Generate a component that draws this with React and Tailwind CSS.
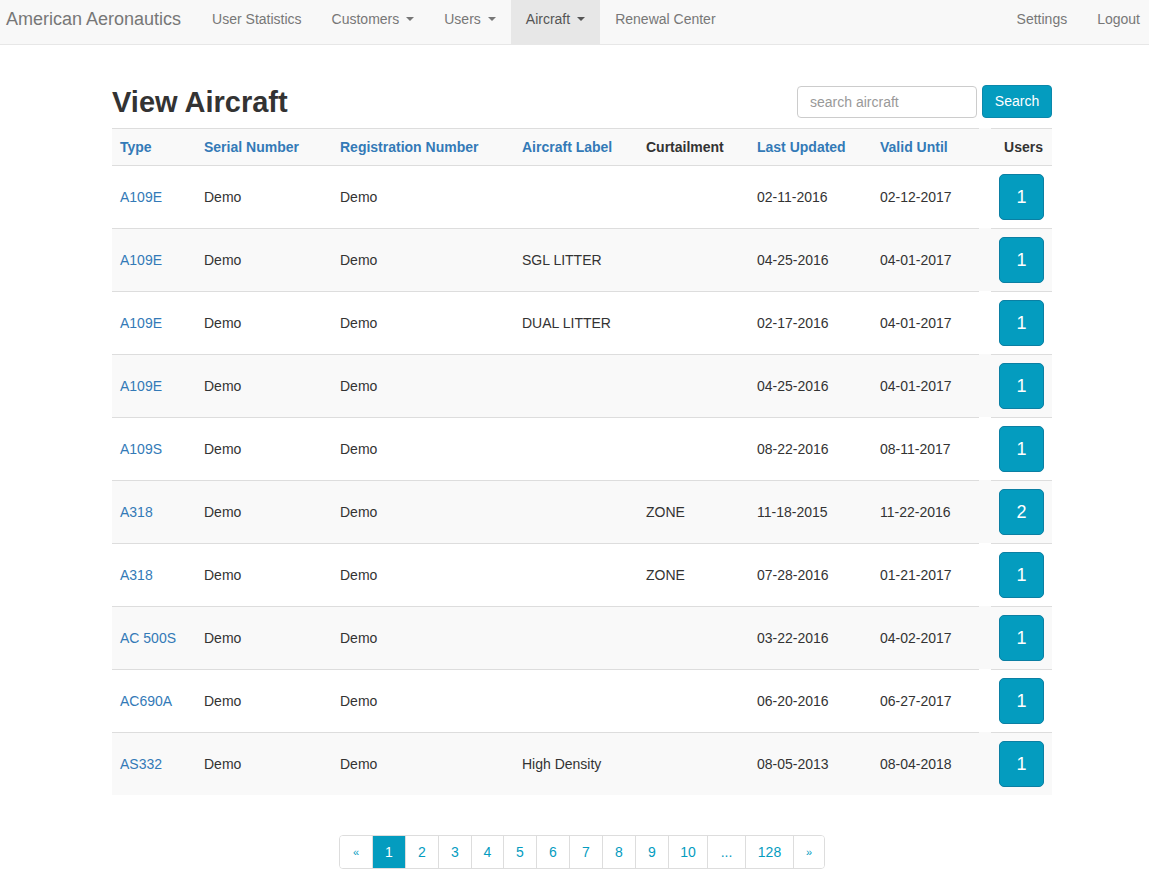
const rows = [
  { type: 'A109E', label: '', curt: '', updated: '02-11-2016', valid: '02-12-2017', users: 1 },
  { type: 'A109E', label: 'SGL LITTER', curt: '', updated: '04-25-2016', valid: '04-01-2017', users: 1 },
  { type: 'A109E', label: 'DUAL LITTER', curt: '', updated: '02-17-2016', valid: '04-01-2017', users: 1 },
  { type: 'A109E', label: '', curt: '', updated: '04-25-2016', valid: '04-01-2017', users: 1 },
  { type: 'A109S', label: '', curt: '', updated: '08-22-2016', valid: '08-11-2017', users: 1 },
  { type: 'A318', label: '', curt: 'ZONE', updated: '11-18-2015', valid: '11-22-2016', users: 2 },
  { type: 'A318', label: '', curt: 'ZONE', updated: '07-28-2016', valid: '01-21-2017', users: 1 },
  { type: 'AC 500S', label: '', curt: '', updated: '03-22-2016', valid: '04-02-2017', users: 1 },
  { type: 'AC690A', label: '', curt: '', updated: '06-20-2016', valid: '06-27-2017', users: 1 },
  { type: 'AS332', label: 'High Density', curt: '', updated: '08-05-2013', valid: '08-04-2018', users: 1 },
]

const pages = [
  { t: '«', w: 'w-[32px]', cls: 'text-[11px]' },
  { t: '1', w: 'w-[33px]', active: true },
  { t: '2', w: 'w-[33px]' },
  { t: '3', w: 'w-[33px]' },
  { t: '4', w: 'w-[32px]' },
  { t: '5', w: 'w-[33px]' },
  { t: '6', w: 'w-[33px]' },
  { t: '7', w: 'w-[33px]' },
  { t: '8', w: 'w-[33px]' },
  { t: '9', w: 'w-[33px]' },
  { t: '10', w: 'w-[39px]' },
  { t: '...', w: 'w-[38px]' },
  { t: '128', w: 'w-[48px]' },
  { t: '»', w: 'w-[31px]', cls: 'text-[11px]' },
]

function Caret() {
  return (
    <span className="inline-block ml-[7px] w-0 h-0 border-x-[4px] border-x-transparent border-t-[4px] border-t-current align-middle" />
  )
}

function NavLink({ children, caret, active }) {
  return (
    <div
      className={`h-full flex items-start pt-[9px] leading-[20px] px-[15px] ${active ? 'bg-[#e7e7e7] text-[#555]' : 'text-[#777]'}`}
    >
      <span className="flex items-center">
        {children}
        {caret && <Caret />}
      </span>
    </div>
  )
}

export default function App() {
  return (
    <div
      className="min-h-[872px] bg-white text-[14px] text-[#333]"
      style={{ fontFamily: '"Liberation Sans", Arial, sans-serif' }}
    >
      {/* Navbar */}
      <div className="h-[45px] bg-[#f8f8f8] border-b border-[#e7e7e7] flex items-stretch">
        <div className="pt-[7px] leading-[24px] pl-[6px] pr-[16px] text-[18px] text-[#777]">
          American Aeronautics
        </div>
        <NavLink>User Statistics</NavLink>
        <NavLink caret>Customers</NavLink>
        <NavLink caret>Users</NavLink>
        <NavLink caret active>Aircraft</NavLink>
        <NavLink>Renewal Center</NavLink>
        <div className="flex-1" />
        <NavLink>Settings</NavLink>
        <div className="pt-[9px] leading-[20px] pl-[15px] pr-[9px] text-[#777]">Logout</div>
      </div>

      <div className="ml-[112px] w-[940px]">
        {/* Title + search */}
        <div className="flex items-end justify-between h-[83px] pb-[10px]">
          <h2 className="text-[29px] font-bold text-[#333] leading-[32px]">View Aircraft</h2>
          <div className="flex items-end gap-[5px]">
            <input
              placeholder="search aircraft"
              className="w-[180px] h-[32px] border border-[#ccc] rounded-[4px] px-[12px] text-[14px] placeholder:text-[#999] outline-none"
            />
            <button className="w-[70px] h-[33px] rounded-[4px] bg-[#049cbf] border border-[#0b88ab] text-white text-[14px]">
              Search
            </button>
          </div>
        </div>

        {/* Table */}
        <div>
          <div className="flex h-[38px] bg-[#f9f9f9] font-bold items-stretch">
            <div className="flex w-[867px] border-y border-[#ddd] items-center text-[#337ab7]">
              <div className="w-[84px] px-[8px]">Type</div>
              <div className="w-[136px] px-[8px]">Serial Number</div>
              <div className="w-[182px] px-[8px]">Registration Number</div>
              <div className="w-[124px] px-[8px]">Aircraft Label</div>
              <div className="w-[111px] px-[8px] text-[#333]">Curtailment</div>
              <div className="w-[123px] px-[8px]">Last Updated</div>
              <div className="w-[107px] px-[8px]">Valid Until</div>
            </div>
            <div className="w-[12px] border-b border-[#ddd]" />
            <div className="w-[61px] border-y border-[#ddd] flex items-center justify-end pr-[9px]">Users</div>
          </div>

          {rows.map((r, i) => (
            <div
              key={i}
              className={`flex items-stretch ${i === 0 ? 'h-[62px]' : 'h-[63px]'} ${i % 2 === 1 ? 'bg-[#f9f9f9]' : 'bg-white'}`}
            >
              <div className={`flex w-[867px] items-center ${i === 0 ? '' : 'border-t border-[#ddd]'}`}>
                <div className="w-[84px] px-[8px] text-[#337ab7]">{r.type}</div>
                <div className="w-[136px] px-[8px]">Demo</div>
                <div className="w-[182px] px-[8px]">Demo</div>
                <div className="w-[124px] px-[8px]">{r.label}</div>
                <div className="w-[111px] px-[8px]">{r.curt}</div>
                <div className="w-[123px] px-[8px]">{r.updated}</div>
                <div className="w-[107px] px-[8px]">{r.valid}</div>
              </div>
              <div className="w-[12px]" />
              <div className={`w-[61px] flex items-center justify-center ${i === 0 ? '' : 'border-t border-[#ddd]'}`}>
                <div className="w-[45px] h-[46px] rounded-[5px] bg-[#049cbf] border border-[#0b7fa3] text-white text-[18px] flex items-center justify-center">
                  {r.users}
                </div>
              </div>
            </div>
          ))}
        </div>

        {/* Pagination */}
        <div className="flex justify-center mt-[40px]">
          <div className="flex h-[34px] border border-[#ddd] rounded-[4px] overflow-hidden">
            {pages.map((p, i) => (
              <div
                key={i}
                className={`${p.w} flex items-center justify-center ${i > 0 ? 'border-l border-[#ddd]' : ''} ${
                  p.active ? 'bg-[#049cbf] text-white border-[#049cbf]' : 'bg-white text-[#049cbf]'
                } ${p.cls || 'text-[14px]'}`}
              >
                {p.t}
              </div>
            ))}
          </div>
        </div>
      </div>
    </div>
  )
}
